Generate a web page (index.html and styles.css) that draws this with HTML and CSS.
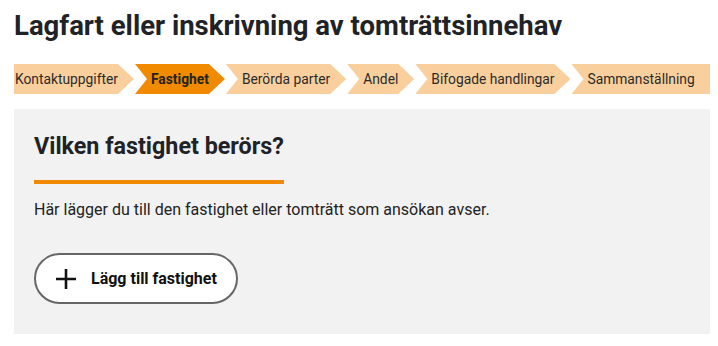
FILE: index.html
```html
<!DOCTYPE html>
<html lang="sv">
<head>
  <meta charset="UTF-8">
  <meta name="viewport" content="width=device-width, initial-scale=1.0">
  <title>Lagfart eller inskrivning av tomträttsinnehav</title>
  <link rel="stylesheet" href="styles.css">
</head>
<body>
  <div class="page">
    <h1 class="page-title">Lagfart eller inskrivning av tomträttsinnehav</h1>

    <!-- Steg i ansökan -->
    <ol class="steps">
      <li class="step step-first">Kontaktuppgifter</li>
      <li class="step step-active">Fastighet</li>
      <li class="step">Berörda parter</li>
      <li class="step">Andel</li>
      <li class="step">Bifogade handlingar</li>
      <li class="step step-last">Sammanställning</li>
    </ol>

    <section class="panel">
      <h2 class="panel-title">Vilken fastighet berörs?</h2>
      <p class="panel-text">Här lägger du till den fastighet eller tomträtt som ansökan avser.</p>
      <button class="add-button" type="button">
        <svg class="add-icon" width="22" height="22" viewBox="0 0 22 22" aria-hidden="true">
          <path d="M11 1 V21 M1 11 H21" stroke="#111" stroke-width="2.6" fill="none"/>
        </svg>
        <span>Lägg till fastighet</span>
      </button>
    </section>
  </div>
</body>
</html>
```

FILE: styles.css
```css
body {
  margin: 0;
  padding: 0;
  background-color: #fff;
  font-family: Roboto, "Liberation Sans", Arial, sans-serif;
  color: #222;
}

.page {
  padding: 0 8px 0 14px;
}

.page-title {
  margin: 9px 0 0;
  font-size: 27.5px;
  font-weight: 700;
  line-height: normal;
  color: #1f2226;
}

/* Steps bar */
.steps {
  display: flex;
  list-style: none;
  margin: 22px 0 0;
  padding: 0;
  height: 30px;
  gap: 1px;
}

.step {
  display: flex;
  align-items: center;
  height: 30px;
  padding: 0 16px 0 16px;
  font-size: 13.8px;
  color: #2b2b2b;
  background-color: #f9d09d;
  clip-path: polygon(0 0, calc(100% - 16px) 0, 100% 50%, calc(100% - 16px) 100%, 0 100%, 12px 50%);
  white-space: nowrap;
}

.step-first {
  padding-left: 1px;
  clip-path: polygon(0 0, calc(100% - 16px) 0, 100% 50%, calc(100% - 16px) 100%, 0 100%);
}

.step-last {
  flex: 1;
  padding-right: 0;
  clip-path: polygon(0 0, 100% 0, 100% 100%, 0 100%, 12px 50%);
}

.step-active {
  background-color: #f18a00;
  font-weight: 700;
  color: #222;
}

/* Content panel */
.panel {
  margin-top: 15px;
  padding: 23px 20px 30px;
  background-color: #f2f2f2;
}

.panel-title {
  display: inline-block;
  margin: 0;
  padding-bottom: 20px;
  border-bottom: 4px solid #f18a00;
  font-size: 23.3px;
  font-weight: 700;
  line-height: normal;
  color: #1f2226;
}

.panel-text {
  margin: 16px 0 0;
  font-size: 16px;
  line-height: normal;
  color: #222;
}

.add-button {
  display: flex;
  align-items: center;
  gap: 14px;
  margin-top: 34px;
  height: 51px;
  padding: 0 19px 0 19px;
  border: 2px solid #666;
  border-radius: 26px;
  background-color: #fff;
  font-family: inherit;
  font-size: 16px;
  font-weight: 700;
  color: #111;
}

.add-icon {
  display: block;
}
```
